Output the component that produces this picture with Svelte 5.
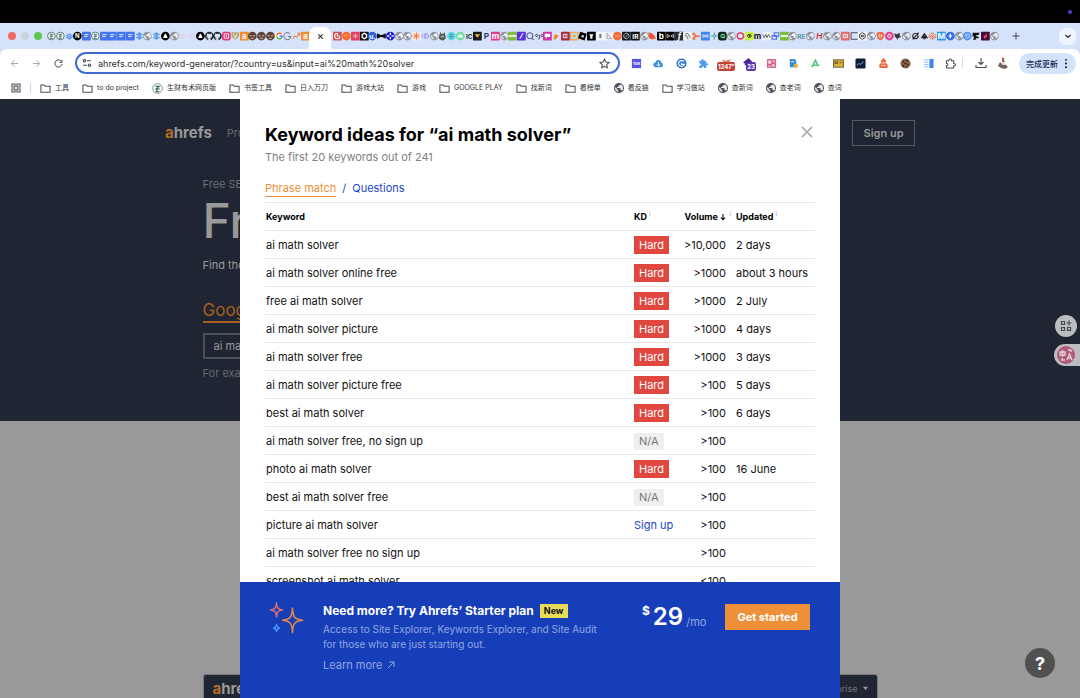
<script>
  const doc = { s: 'sq', c: '#4374ee', p: 'M4 5.5h8M4 9h6', f: '#fff' };
  const globe = { s: 'globe' };
  const seal = { s: 'ring', c: '#426f67', p: 'M5 5h5.500L6 8.500h5M8 8.500l-2 4h4.500', f: '#426f67' };
  const snow = { s: 'none', c: '', p: 'M8 1v14M2 4.500l12 7M2 11.500l12-7M5 2.500l3 3 3-3M5 13.500l3-3 3 3', f: '#5a9be6', w: 2.2 };
  const drop = { s: 'circ', c: '#000', d: 'M8 3.500C10 6 11 8 12 11.500H4C5 8 6 6 8 3.500z', f: '#fff' };
  const cat = { s: 'none', d: 'M8 0C3.580 0 0 3.580 0 8c0 3.540 2.290 6.530 5.470 7.590.400.070.550-.170.550-.380v-1.490c-2.010.370-2.530-.490-2.690-.940-.090-.230-.480-.940-.820-1.130-.280-.150-.680-.520-.010-.530.630-.010 1.080.580 1.230.820.720 1.210 1.870.870 2.330.660.070-.520.280-.870.510-1.070-1.780-.200-3.640-.890-3.640-3.950 0-.870.310-1.590.820-2.150-.080-.200-.360-1.020.080-2.120 0 0 .670-.210 2.200.820a7.600 7.600 0 0 1 4 0c1.530-1.040 2.200-.820 2.200-.820.440 1.100.160 1.920.080 2.120.510.560.820 1.270.820 2.150 0 3.070-1.870 3.750-3.650 3.950.290.250.540.730.540 1.480v2.200c0 .210.150.460.550.380A8 8 0 0 0 16 8c0-4.420-3.580-8-8-8z', f: '#24292f' };
  const mask = { s: 'circ', c: '#5b4338', d: 'M3 6l4 1-1 2-3-1zM13 6L9 7l1 2 3-1zM5 11h6l-1 2H6z', f: '#d9c3a8' };
  const heart = { s: 'none', p: 'M8 13L3 7q1-4 5-1 4-3 5 1z', f: '#e9c4dc', w: 1.5 };
  const aMark = { s: 'sq', c: '#f28b32', t: 'a', f: '#fff' };
  const strip = { s: 'sq', c: '#7dba3c', d: 'M1 6h14v4H1z', f: '#e2f3d3' };

  const leftTabs = [
    seal, seal,
    { s: 'none', p: 'M2 6l6 4 6-4M2 9.500l6 4 6-4M5 4l3 2 3-2', f: '#4b8df0', w: 2 },
    { s: 'circ', c: '#000', t: 'N', f: '#fff', z: 11 },
    doc, seal, doc, doc, doc, doc, snow, globe, snow, drop, globe, heart, heart, drop, cat, cat,
    { s: 'sq', c: '#dd3a79', p: 'M4 4h8v8H4zM8 6.500v3', f: '#fff', r: 4 },
    { s: 'none', d: 'M1 1h14v7q-2 5-7 7-5-2-7-7z', f: '#bda77c', p: 'M5 4l3 8 3-8' },
    aMark, mask, mask, mask,
    { s: 'google' },
    { s: 'none', p: 'M13 4a6.500 6.500 0 1 0 1.500 5H9', f: '#5b6069', w: 1.6 },
    { s: 'none', p: 'M1 13l4-5 3 2 6-6M10 3h4v4', f: '#ed7c35', w: 2 },
    aMark
  ];

  const rightTabs = [
    { s: 'sq', c: '#d84f52', p: 'M8 3a5 5 0 1 0 5 6M8 3v5h4', f: '#fff', w: 2 },
    { s: 'circ', c: '#f06c33', p: 'M3 8q5-3 10 0', f: '#f9b060' },
    { s: 'sq', c: '#e0405c', p: 'M8 3v10M3 8h10M5 5l6 6M11 5l-6 6', f: '#f9a3ae' },
    { s: 'sq', c: '#101214', p: 'M8 3l4 2.500v5L8 13l-4-2.500v-5z', f: '#fff', w: 2.5 },
    { s: 'circ', c: '#2c5fe2', t: 'u.', f: '#fff' },
    { s: 'none', d: 'M0 3l7 3h2l7-3v10l-7-3H7l-7 3z', f: '#111' },
    { s: 'circ', c: '#1616c9', p: 'M8 2v4M8 10v4M2 8h4M10 8h4', f: '#fff', w: 2.5 },
    globe, globe,
    { s: 'sq', c: '#fbeee8', p: 'M8 1v14M1 8h14M3 3l10 10M13 3L3 13', f: '#e36d42' },
    { s: 'none', p: 'M1 6h3M1 10h3M7 4v8q7 0 7-4T7 4', f: '#7377e8' },
    globe,
    { s: 'none', d: 'M4 0l2 4h4l2-4 1 6q2 3 1 7-3 3-6 3t-6-3q-1-4 1-7z', f: '#555b58', p: 'M5 10q3-3 6 0' },
    { s: 'circ', c: '#5cdbe5', p: 'M4 6q4-3 8 0M4 10q4-3 8 0M8 8v5', f: '#238a9e' },
    { s: 'circ', c: '#73db9b', d: 'M3 11q0-5 5-6 5 1 5 6z', f: '#e6fff0' },
    { s: 'none', t: 'IC', f: '#333' },
    { s: 'sq', c: '#191919', d: 'M3 5h10l-5 6z', f: '#f0bd3d' },
    { s: 'none', t: 'P', f: '#1b3b7c' },
    { s: 'sq', c: '#dc3e87', t: 'm', f: '#fff' },
    globe, strip,
    { s: 'sq', c: '#5b2ce2', p: 'M5 13l6-10', f: '#fff', w: 2 },
    { s: 'none', p: 'M7 2a5.500 5.500 0 1 0 .100 0M10 11l4 4', f: '#4e587c', w: 2 },
    { s: 'none', p: 'M3 5a2 2 0 1 0 .100 0M8 6v6q0 2-2 2M13 5a2 2 0 1 0 .100 0', f: '#222', w: 1.5 },
    { s: 'sq', c: '#cf33a8', d: 'M3 4h10v6H8l-3 3v-3H3z', f: '#fff' },
    { s: 'none', d: 'M3 15l1-8 5-3 3 4-4 5z', f: '#f08427', p: 'M9 6l1-5M10 6l4-2' },
    { s: 'sq', c: '#a62e40', p: 'M12 5H4v6h8M7 8h5', f: '#fff' },
    { s: 'sq', c: '#efa653', p: 'M4 4h8v8H4z', f: '#bfe3e0', w: 3 },
    { s: 'none', d: 'M4 0l12 4-4 12L0 12zM7 6L6 10l4 1 1-4z', f: '#000', even: true },
    { s: 'sq', c: '#000', d: 'M4 4l3 1h5l-2 3v5H6V8z', f: '#fff' },
    { s: 'sq', c: '#f5f6fa', d: 'M6 4h4v8H6z', f: '#7c7f83' },
    { s: 'sq', c: '#eceff5', p: 'M4 3v10h9M4 4l8 9', f: '#9ba0a8' },
    { s: 'circ', c: '#f46b36', p: 'M3 8h10', f: '#ffb98c' },
    { s: 'sq', c: '#161b1d', p: 'M8 3a5 5 0 1 0 .100 0M4 12l8-8', f: '#b8c5c5' },
    { s: 'sq', c: '#111', t: 'IR', f: '#fff' },
    globe,
    { s: 'none', d: 'M1 1q10 1 14 13H5Q0 11 1 1z', f: '#f0552e', p: 'M9 14h6' },
    { s: 'sq', c: '#000', t: 'b', f: '#fff' },
    { s: 'sq', c: '#000', p: 'M2 5l5 3-5 3zM14 5L9 8l5 3z', f: '#ccc' },
    { s: 'sq', c: '#26292f', t: 'f', f: '#fff', i: 1 },
    { s: 'sq', c: '#eef0f3', p: 'M4 5q4-4 6 0t3 6M3 8q5-2 6 6', f: '#555' },
    { s: 'none', d: 'M1 2h5v4l4 1h5v3h-5l-4 1v4H1v-4l4-3-4-2z', f: '#f07542' },
    { s: 'sq', c: '#3f83f0', p: 'M8 8C6 5 3 5 3 8s3 3 5 0 5-3 5 0-3 3-5 0', f: '#fff' },
    { s: 'none', p: 'M8 1v3M8 12v3M1 8h3M12 8h3M5 8l3-3 3 3-3 3z', f: '#5bb5b0', w: 2 },
    { s: 'sq', c: '#15241e', p: 'M12 5H7q-4 3 0 6h5V8H8', f: '#54cb92', r: 5, w: 2 },
    globe,
    { s: 'none', p: 'M8 2l5 2 1 5-3 4H5L2 9l1-5z', f: '#e93555', w: 2.5 },
    { s: 'sq', c: '#c7f44b', p: 'M4 9q0-4 4-4v5q4 0 4-3M6 12l5-8', f: '#222' },
    { s: 'none', t: 'm', f: '#111' },
    { s: 'sq', c: '#f0f2f4', p: 'M1 5l3 6 3-6 2 6 3-6 3 6', f: '#555' },
    { s: 'none', p: 'M6 2h8v7H6zM2 7h8v7H2z', f: '#4b72ee', w: 2 },
    strip, globe,
    { s: 'none', t: 'RE', f: '#559c9d' },
    globe,
    { s: 'none', t: 'H', f: '#c63945', i: 1 },
    globe, globe,
    { s: 'sq', c: '#e56b68', p: 'M4 5h8v6H4zM6 8h4', f: '#fff' },
    { s: 'none', p: 'M2 2h12M2 2v12h12', f: '#333', w: 1.5 },
    { s: 'sq', c: '#f2f3f5', p: 'M8 2l5 3v6l-5 3-5-3V5zM5 6l6 4M11 6l-6 4', f: '#333' },
    globe,
    { s: 'none', d: 'M3 1h10l2 4-2 7-5 4-5-4-2-7z', f: '#ec5a2b', p: 'M5 5l3 2 3-2-1 5-2 2-2-2z' },
    { s: 'circ', c: '#dd4290', p: 'M8 5a3 3 0 1 0 .100 0', f: '#ffd4bb', w: 2 },
    { s: 'none', d: 'M1 3l6 2 6-3-1 5 3 3-5 1-2 4-3-5-3-1 2-2z', f: '#34373a' },
    globe,
    { s: 'none', p: 'M8 3a5 5 0 1 0 .100 0M3 14L14 2', f: '#222', w: 2 },
    { s: 'none', d: 'M8 2l3 4 4 6h-5v2H6v-2H1l4-6z', f: '#272b2a' },
    { s: 'none', p: 'M2 11V7q6-9 12 0v5M5 13V8q3-4 6 0v6M8 8v7', f: '#ed743c', w: 1.8 },
    { s: 'sq', c: '#2e94e8', t: 'M', f: '#fff' },
    { s: 'circ', c: '#2e6cf1', d: 'M9 2L4 9h3l-1 5 6-7H9z', f: '#fff' },
    globe,
    { s: 'circ', c: '#4c91ef', p: 'M4 8q0-4 4-4t4 4-4 4-2-4 3-1', f: '#bfe0ff' },
    { s: 'none', d: 'M1 2h13l-2 4H8v3h4v3H7v3H2l2-6H1z', f: '#111' },
    { s: 'sq', c: '#40103a', d: 'M5 12q-1-5 6-8 1 5-2 8z', f: '#f24747' },
    globe
  ];

  const bookmarks = [
    ['folder', '工具'], ['folder', 'to do project'], ['seal', '生财有术网页版'], ['folder', '书签工具'],
    ['folder', '日入万刀'], ['folder', '游戏大站'], ['folder', '游戏'], ['folder', 'GOOGLE PLAY'],
    ['folder', '找新词'], ['folder', '看榜单'], ['globe', '看反链'], ['folder', '学习做站'],
    ['globe', '查新词'], ['globe', '查老词'], ['globe', '查词']
  ];

  const rows = [
    ['ai math solver', 'Hard', '>10,000', '2 days'],
    ['ai math solver online free', 'Hard', '>1000', 'about 3 hours'],
    ['free ai math solver', 'Hard', '>1000', '2 July'],
    ['ai math solver picture', 'Hard', '>1000', '4 days'],
    ['ai math solver free', 'Hard', '>1000', '3 days'],
    ['ai math solver picture free', 'Hard', '>100', '5 days'],
    ['best ai math solver', 'Hard', '>100', '6 days'],
    ['ai math solver free, no sign up', 'N/A', '>100', ''],
    ['photo ai math solver', 'Hard', '>100', '16 June'],
    ['best ai math solver free', 'N/A', '>100', ''],
    ['picture ai math solver', 'Sign up', '>100', ''],
    ['ai math solver free no sign up', '', '>100', ''],
    ['screenshot ai math solver', '', '<100', '']
  ];
</script>

{#snippet globeShape(color)}
  <circle cx="8" cy="8" r="7" fill="#eef2fb" />
  <path transform="translate(-1.600 -1.600) scale(.8)" fill={color} d="M12 2C6.480 2 2 6.480 2 12s4.480 10 10 10 10-4.480 10-10S17.520 2 12 2zm-1 17.930c-3.950-.490-7-3.850-7-7.930 0-.620.080-1.210.210-1.790L9 15v1c0 1.100.900 2 2 2v1.930zm6.900-2.540c-.260-.810-1-1.390-1.900-1.390h-1v-3c0-.550-.450-1-1-1H8v-2h2c.550 0 1-.450 1-1V7h2c1.100 0 2-.900 2-2v-.410c2.930 1.190 5 4.060 5 7.410 0 2.080-.800 3.970-2.100 5.390z" />
{/snippet}

{#snippet favicon(n)}
  <svg class="fav" viewBox="0 0 16 16" aria-hidden="true">
    {#if n.s === 'globe'}
      {@render globeShape('#8f949c')}
    {:else if n.s === 'google'}
      <circle cx="8" cy="8" r="8" fill="#fff" />
      <g fill="none" stroke-width="2.600">
        <path d="M12 4.500A5 5 0 0 0 3.500 6" stroke="#ea4335" />
        <path d="M3.500 6a5 5 0 0 0 0 4" stroke="#fbbc05" />
        <path d="M3.500 10a5 5 0 0 0 8 2" stroke="#34a853" />
        <path d="M11.500 12Q13 10.500 13 8H8" stroke="#4285f4" />
      </g>
    {:else}
      {#if n.s === 'sq'}<rect width="16" height="16" rx={n.r ?? 1} fill={n.c} />{/if}
      {#if n.s === 'circ'}<circle cx="8" cy="8" r="8" fill={n.c} />{/if}
      {#if n.s === 'ring'}<circle cx="8" cy="8" r="7" fill="#eef5f5" stroke={n.c} stroke-width="1.5" />{/if}
      {#if n.d}<path d={n.d} fill={n.f} fill-rule={n.even ? 'evenodd' : 'nonzero'} />{/if}
      {#if n.p}<path d={n.p} fill="none" stroke={n.d ? '#f4efe0' : n.f} stroke-width={n.w ?? 1.6} />{/if}
      {#if n.t}<text x="8" y={n.z ? 12 : 13} text-anchor="middle" font-size={n.z ?? (n.t.length > 1 ? 12 : 15)} font-weight="700" font-style={n.i ? 'italic' : 'normal'} fill={n.f}>{n.t}</text>{/if}
    {/if}
  </svg>
{/snippet}

<div class="screen">
  <div class="menubar"><span class="dot"></span></div>

  <header class="browser">
    <div class="tabs">
      <div class="lights"><i class="red"></i><i class="grey"></i><i class="green"></i></div>
      <div class="favs left">{#each leftTabs as n}{@render favicon(n)}{/each}</div>
      <button class="active" aria-label="Close tab">
        <svg viewBox="0 0 8 8" width="7" height="7"><path d="M1.500 1.500l5 5M6.500 1.500l-5 5" stroke="#222" stroke-width="1.2" /></svg>
      </button>
      <div class="favs right">{#each rightTabs as n}{@render favicon(n)}{/each}</div>
      <button class="plain plus" aria-label="New tab">
        <svg viewBox="0 0 8 8" width="8" height="8"><path d="M4 .500v7M.500 4h7" stroke="#444a55" stroke-width="1" /></svg>
      </button>
      <button class="plain chev" aria-label="Search tabs">
        <svg viewBox="0 0 8 8" width="8" height="8"><path d="M1.500 3L4 5.500 6.500 3" fill="none" stroke="#222" stroke-width="1.2" /></svg>
      </button>
    </div>

    <div class="toolbar">
      <div class="navs">
        <button class="plain" aria-label="Back"><svg viewBox="0 0 10 10"><path d="M9 5H1.500M5 1.500L1.500 5 5 8.500" class="ln faint" /></svg></button>
        <button class="plain" aria-label="Forward"><svg viewBox="0 0 10 10"><path d="M1 5h7.500M5 1.500L8.500 5 5 8.500" class="ln faint" /></svg></button>
        <button class="plain" aria-label="Reload"><svg viewBox="0 0 10 10"><path d="M8.500 3A4 4 0 1 0 9 5.500M8.800 1v2.800H6" class="ln" /></svg></button>
      </div>
      <div class="address">
        <svg viewBox="0 0 10 10" width="10" height="10"><circle cx="2.500" cy="2.800" r="1.200" class="ln" /><path d="M5 2.800h4M1 7.200h4" class="ln" /><circle cx="7.500" cy="7.200" r="1.200" class="ln" /></svg>
        <input aria-label="Address" value="ahrefs.com/keyword-generator/?country=us&input=ai%20math%20solver" />
        <button class="plain" aria-label="Bookmark"><svg viewBox="0 0 12 12" width="11" height="11"><path d="M6 1.200l1.500 3.200 3.400.400-2.500 2.400.700 3.500L6 9 2.900 10.700l.700-3.500L1.100 4.800l3.400-.400z" class="ln" /></svg></button>
      </div>
      <div class="exts">
        <span><svg viewBox="0 0 12 12"><rect x="1" y="1" width="10" height="10" fill="#5b52ec" /><text x="6" y="8" text-anchor="middle" font-size="4" font-weight="700" fill="#fff">TDK</text></svg></span>
        <span><svg viewBox="0 0 12 12"><path d="M3 10a2.500 2.500 0 0 1-.500-5Q4 1.500 7 2.500q2 .500 2.300 2.700A2.500 2.500 0 0 1 9 10z" fill="#3f92d9" /><path d="M6 4.500v4M4.200 7L6 8.800 7.800 7" stroke="#fff" fill="none" /></svg></span>
        <span><svg viewBox="0 0 12 12"><circle cx="6" cy="6" r="5.500" fill="#2e73cf" /><path d="M8.500 4a3.200 3.200 0 1 0 .500 3H6V5.500" stroke="#fff" fill="none" stroke-width="1.300" /></svg></span>
        <span><svg viewBox="0 0 12 12"><path d="M1.500 3H4q-.700-2 1-2t1 2h3v3q2-.700 2 .800T9 7.800V11H6.500q.300-2-1-2t-1 2H1.500V8q2 .300 2-1t-2-1z" fill="#4a9df0" /></svg></span>
        <span class="badged"><svg viewBox="0 0 12 12"><path d="M1 1l4 2 6-2-2 4H3z" fill="#e58775" /></svg><b class="badge wide">1247°</b></span>
        <span class="badged"><svg viewBox="0 0 12 12"><path d="M0 5l6-5 4 4v4H2V6z" fill="#48248b" /></svg><b class="badge violet">23</b></span>
        <span><svg viewBox="0 0 12 12"><rect x="1" y="1" width="10" height="10" rx="1" fill="#d9608f" /><path d="M2.500 3.500h3v2h-3zM4 2.500v4M7 3h2v2M3 8v1.500h2M6.500 9.500L8 6.500l1.500 3M7 8.500h2" stroke="#fff" fill="none" stroke-width=".8" /></svg></span>
        <span><svg viewBox="0 0 12 12"><path d="M2 1h5l2 2v7H2z" fill="#348cdc" /><circle cx="8.500" cy="8.500" r="2.500" fill="#e4b83c" /><path d="M3.500 4h3" stroke="#fff" /></svg></span>
        <span><svg viewBox="0 0 12 12"><path d="M2 10l4-7.500 3 6.500M4 8h6" stroke="#55c478" stroke-width="1.700" fill="none" /></svg></span>
        <span><svg viewBox="0 0 12 12"><rect x=".5" y="2" width="11" height="8" fill="#ddb13c" stroke="#695b38" /><path d="M2 4h3v2H2zM7 5h3" stroke="#6c5726" fill="none" /></svg></span>
        <span><svg viewBox="0 0 12 12"><rect x=".5" y=".5" width="11" height="11" rx="1.500" fill="#101b36" /><path d="M2 8l2-2 2 1 3.500-3" stroke="#6bc4ef" fill="none" /></svg></span>
        <span><svg viewBox="0 0 12 12"><path d="M6 0l3 3-1 2 2.500 2v4h-9V7L4 5 3 3z" fill="#ed683b" /><path d="M4 5.500h4M3.500 8h5" stroke="#fff" stroke-width=".8" /></svg></span>
        <span><svg viewBox="0 0 12 12"><circle cx="6" cy="6" r="5.500" fill="#8a6049" /><path d="M3 4h1.500M7 3h1.500M5 6h1.500M8 7h1.500M3 8.500h1.500M7 9.500h1" stroke="#1e1512" stroke-width="1.500" /></svg></span>
        <span><svg viewBox="0 0 12 12"><path d="M7 1h4.500v10H7z" fill="#3e87e8" /><path d="M1 2h5M1 4.500h5M1 7h5M1 9.500h5" stroke="#87b6f5" /></svg></span>
        <span><svg viewBox="0 0 12 12"><path d="M1.500 3H4.200q0-2 1.500-2t1.500 2h2.300v3q2 0 2 1.300T9.500 8.500V11h-8V8.300q1.700 0 1.700-1.300T1.500 5.700z" class="ln" /></svg></span>
      </div>
      <i class="rule"></i>
      <div class="tail">
        <button class="plain" aria-label="Downloads"><svg viewBox="0 0 12 12" width="12" height="12"><path d="M6 1v6.500M3.500 5L6 7.500 8.500 5M1 8v2.500h10V8" class="ln" /></svg></button>
        <button class="plain" aria-label="Profile"><svg viewBox="0 0 12 12" width="12" height="12"><path d="M4 11L1 9l2-4 2 2V3l2-1 1 5 3 3-3 2z" fill="#70615c" /><path d="M5 5h3v3H5z" fill="#eddad0" /><circle cx="6" cy="1.800" r="1.200" fill="#c45840" /></svg></button>
        <button class="update">完成更新<svg viewBox="0 0 4 12" width="4" height="11"><circle cx="2" cy="2" r="1" /><circle cx="2" cy="6" r="1" /><circle cx="2" cy="10" r="1" /></svg></button>
      </div>
    </div>

    <nav class="marks" aria-label="Bookmarks">
      <svg class="apps" viewBox="0 0 10 10" width="10" height="10"><path d="M1 1h3v3H1zM6 1h3v3H6zM1 6h3v3H1zM6 6h3v3H6z" class="ln" /></svg>
      <i class="rule"></i>
      {#each bookmarks as [kind, label]}
        <a href="#bookmark">
          {#if kind === 'folder'}
            <svg viewBox="0 0 12 12" width="11" height="11"><path d="M1 2.200h3.500l1.200 1.300H11V10H1z" class="ln" /></svg>
          {:else if kind === 'seal'}
            <svg viewBox="0 0 16 16" width="11" height="11"><circle cx="8" cy="8" r="7" fill="#fff" stroke="#426f67" /><path d={seal.p} fill="none" stroke="#426f67" stroke-width="1.700" /></svg>
          {:else}
            <svg viewBox="0 0 16 16" width="10" height="10">{@render globeShape('#50545b')}</svg>
          {/if}
          {label}
        </a>
      {/each}
    </nav>
  </header>

  <main class="page">
    <section class="hero">
      <div class="sitenav">
        <strong class="logo"><span>a</span>hrefs</strong>
        <span class="link">Pro</span>
        <button class="signup">Sign up</button>
      </div>
      <div class="content">
        <p class="crumb">Free SEO</p>
        <h1>Free</h1>
        <p class="lead">Find the</p>
        <a class="engine" href="#google">Google</a>
        <input class="query" aria-label="Keyword" value="ai math" />
        <p class="hint">For example</p>
      </div>
    </section>
    <div class="bar">
      <strong class="logo"><span>a</span>hrefs</strong>
      <span class="ent">Enterprise <svg viewBox="0 0 6 6" width="5" height="5"><path d="M0 1h6L3 5z" fill="#999" /></svg></span>
    </div>

    <div class="modal" role="dialog" aria-labelledby="title">
      <div class="scroll">
        <div class="head">
          <h2 id="title">Keyword ideas for “ai math solver”</h2>
          <button class="plain" aria-label="Close"><svg viewBox="0 0 12 12" width="12" height="12"><path d="M1 1l10 10M11 1L1 11" stroke="#a6a6a6" stroke-width="1.600" /></svg></button>
        </div>
        <p class="count">The first 20 keywords out of 241</p>
        <div class="switch"><a class="on" href="#phrase">Phrase match</a><span>/</span><a href="#questions">Questions</a></div>
        <table>
          <colgroup><col /><col class="kd" /><col class="vol" /><col class="upd" /></colgroup>
          <thead>
            <tr><th>Keyword</th><th>KD <sup>i</sup></th><th class="num">Volume <svg viewBox="0 0 6 8" width="6" height="7"><path d="M3 0v6.500M.500 4L3 6.500 5.500 4" fill="none" stroke="#000" stroke-width="1.200" /></svg><sup class="out">i</sup></th><th class="up">Updated <sup>i</sup></th></tr>
          </thead>
          <tbody>
            {#each rows as [kw, kd, vol, upd]}
              <tr>
                <td>{kw}</td>
                <td>{#if kd === 'Hard'}<span class="hard">Hard</span>{:else if kd === 'N/A'}<span class="na">N/A</span>{:else if kd}<a href="#signup">{kd}</a>{/if}</td>
                <td class="num">{vol}</td>
                <td class="up">{upd}</td>
              </tr>
            {/each}
          </tbody>
        </table>
      </div>
      <footer>
        <svg class="stars" viewBox="0 0 37 34" width="37" height="34" fill="none" stroke-width="1.500" stroke-linejoin="round">
          <path d="M9.500 2C9.800 7 11 8.500 15.500 9 11 9.500 9.800 11 9.500 16 9.200 11 8 9.500 3.500 9 8 8.500 9.200 7 9.500 2z" stroke="#e3706f" />
          <path d="M25.500 7C26 15.500 27 18.300 35.500 19.300 27 20.300 26 23 25.500 31.500 25 23 24 20.300 15.500 19.300 24 18.300 25 15.500 25.500 7z" stroke="#e88b45" />
          <path d="M9.500 23.500Q10 26.500 12.500 27 10 27.500 9.500 30.500 9 27.500 6.500 27 9 26.500 9.500 23.500z" stroke="#4295f5" />
        </svg>
        <div class="pitch">
          <h3>Need more? Try Ahrefs’ Starter plan <span class="new">New</span></h3>
          <p>Access to Site Explorer, Keywords Explorer, and Site Audit for those who are just starting out.</p>
          <a href="#learn">Learn more <svg viewBox="0 0 8 8" width="8" height="8"><path d="M1 7l6-6M2 1h5v5" fill="none" stroke="currentColor" /></svg></a>
        </div>
        <div class="price"><sup>$</sup><strong>29</strong><span>/mo</span></div>
        <button class="cta">Get started</button>
      </footer>
    </div>

    <div class="floaters">
      <button class="tile" aria-label="Add widget"><svg viewBox="0 0 12 12" width="12" height="12"><path d="M1.500 1.500h3v3h-3zM1.500 7.500h3v3h-3zM7.500 7.500h3v3h-3zM9 .500v5M6.500 3h5" fill="none" stroke="#44474b" stroke-width="1.200" /></svg></button>
      <button class="trans" aria-label="Translate"><svg viewBox="0 0 18 18" width="18" height="18"><circle cx="9" cy="9" r="9" fill="#b2597a" /><path d="M3 6h5v3H3zM5.500 4v7M11 4h3v2M5 12v2h3M10 14l2.500-6 2.500 6M11 12h3" fill="none" stroke="#e0d4d9" stroke-width="1.300" /></svg></button>
    </div>
    <button class="help" aria-label="Help">?</button>
  </main>
</div>

<style>
  :global(body) { margin: 0; background: #999; }
  * { box-sizing: border-box; }
  button, input { font: inherit; }
  h1, h2, h3, p { margin: 0; }
  a { color: inherit; text-decoration: none; }
  svg { display: block; flex: none; }
  .screen { display: flex; flex-direction: column; height: 100vh; overflow: hidden; font-family: Inter, "Noto Sans CJK SC", sans-serif; }
  .plain { display: flex; align-items: center; justify-content: center; padding: 0; border: 0; background: none; }
  .ln { fill: none; stroke: #474b52; stroke-width: 1.1; }
  .faint { stroke: #a4a7ac; }
  .rule { width: 1px; height: 10px; background: #c9dafa; }

  .menubar { display: flex; align-items: center; justify-content: flex-end; height: 23px; padding-right: 8px; background: #000; flex: none; }
  .dot { width: 4px; height: 4px; border-radius: 50%; background: #6038c8; }

  .browser { flex: none; background: #d6e1fa; }
  .tabs { display: flex; align-items: center; height: 26px; padding: 0 4px 0 8px; }
  .lights { display: flex; gap: 5px; width: 39px; flex: none; }
  .lights i { width: 8px; height: 8px; border-radius: 50%; }
  .red { background: #ee6a5f; }
  .grey { background: #ccd2df; }
  .green { background: #61c554; }
  .favs { display: flex; flex: 30 1 0; min-width: 0; }
  .favs.right { flex-grow: 76; margin-left: 2px; }
  .fav { flex: 1 1 0; min-width: 0; height: 10px; overflow: visible; }
  .active { display: flex; align-items: center; justify-content: center; align-self: flex-end; width: 22px; height: 22px; padding: 0 0 4px; border: 0; border-radius: 7px 7px 0 0; background: #fff; flex: none; }
  .plus { width: 36px; flex: none; }
  .chev { width: 17px; height: 17px; margin-left: 25px; border-radius: 6px; background: #eef3fd; flex: none; }

  .toolbar { display: flex; align-items: center; height: 28px; padding: 0 4px 0 8px; border-radius: 7px 7px 0 0; background: #fff; }
  .navs { display: flex; gap: 10px; width: 67px; flex: none; }
  .navs button { width: 12px; }
  .navs svg { width: 9px; height: 9px; }
  .address { display: flex; align-items: center; gap: 6px; flex: 1; min-width: 0; height: 22px; padding: 0 8px 0 5px; border: 2px solid #3e6cd3; border-radius: 11px; }
  .address input { flex: 1; min-width: 0; padding: 0; border: 0; outline: 0; background: none; font-size: 9px; color: #2c2f36; }
  .exts { display: flex; width: 337px; margin-left: 5px; flex: none; }
  .exts > span { display: flex; flex: 1; align-items: center; justify-content: center; position: relative; }
  .exts svg { width: 11px; height: 11px; }
  .badge { position: absolute; left: 2px; top: 4px; padding: 0 1px; border-radius: 2px; background: #c6413b; color: #fff; font-size: 6px; line-height: 9px; }
  .badge.violet { left: 9px; background: #5736b5; }
  .tail { display: flex; align-items: center; gap: 10px; margin-left: 12px; flex: none; }
  .update { display: flex; align-items: center; gap: 6px; height: 21px; padding: 0 8px 0 7px; border: 0; border-radius: 11px; background: #d5e2fb; font-size: 8px; font-weight: 500; color: #1b2a55; }

  .marks { display: flex; align-items: center; gap: 13px; height: 22px; padding: 0 11px; background: #fff; font-size: 7px; line-height: 10px; color: #303338; white-space: nowrap; }
  .marks a { display: flex; align-items: center; gap: 4px; }
  .marks .rule { margin: 0 -4px; }

  .page { position: relative; flex: 1; min-height: 0; overflow: hidden; background: #999; }
  .hero { height: 322px; background: #1f2532; color: #999; }
  .sitenav { display: flex; align-items: center; max-width: 750px; margin: 0 auto; padding-top: 21px; }
  .logo { font-size: 15px; line-height: 20px; color: #999; }
  .logo span { color: #b96d24; }
  .link { margin-left: 15px; font-size: 11px; color: #656973; }
  .signup { width: 63px; height: 26px; margin-left: auto; padding: 0; border: 1px solid #555a65; background: none; color: #999; font-size: 11px; font-weight: 600; }
  .content { display: flex; flex-direction: column; align-items: flex-start; max-width: 675px; margin: 0 auto; padding-top: 30px; }
  .crumb { font-size: 11px; line-height: 16px; color: #6b6f78; }
  h1 { font-size: 48px; line-height: 58px; font-weight: 500; }
  .lead { padding-top: 7px; font-size: 11px; line-height: 16px; }
  .engine { margin-top: 27px; border-bottom: 2px solid #a55f1e; font-size: 17px; line-height: 21px; color: #a55f1e; }
  .query { width: 70%; height: 26px; margin-top: 10px; padding: 0 9px; border: 2px solid #4b505b; background: none; font-size: 11px; color: #999; }
  .hint { padding-top: 6px; font-size: 11px; line-height: 16px; color: #656973; }
  .bar { position: absolute; left: 0; right: 0; bottom: 0; display: flex; align-items: center; justify-content: space-between; max-width: 675px; height: 24px; margin: 0 auto; padding: 4px 9px 0; border: 1px solid #777; border-bottom: 0; border-radius: 3px 3px 0 0; background: #1f2532; }
  .ent { display: flex; align-items: center; gap: 5px; font-size: 9px; color: #777; }

  .modal { position: absolute; top: 0; bottom: 0; left: 0; right: 0; display: flex; flex-direction: column; max-width: 600px; margin: 0 auto; background: #fff; color: #111; }
  .scroll { flex: 1; min-height: 0; overflow: hidden; padding: 24px 25px 0; }
  .head { display: flex; align-items: center; justify-content: space-between; padding-right: 2px; }
  h2 { font-size: 18px; line-height: 24px; font-weight: 700; color: #000; }
  .head button { margin-bottom: 7px; }
  .count { font-size: 11px; line-height: 20px; color: #808080; }
  .switch { display: flex; gap: 6px; margin-top: 13px; font-size: 11px; line-height: 16px; color: #1c46c8; }
  .switch .on { border-bottom: 1px solid #ed8f38; color: #ed8f38; }
  table { width: 100%; margin-top: 5px; border-collapse: collapse; border-top: 1px solid #e8e8e8; table-layout: fixed; }
  .kd { width: 50px; }
  .vol { width: 43px; }
  .upd { width: 89px; }
  tr { height: 28px; border-bottom: 1px solid #e8e8e8; }
  th { padding: 0 0 0 1px; font-size: 9px; line-height: 10px; text-align: left; color: #000; white-space: nowrap; }
  td { padding: 0 0 0 1px; font-size: 11px; line-height: 18px; white-space: nowrap; }
  td a { color: #1c46c8; }
  th svg { display: inline-block; vertical-align: -1px; }
  sup { font-size: 6px; font-weight: 400; line-height: 1; color: #999; }
  .num { position: relative; padding-left: 0; text-align: right; }
  .out { position: absolute; right: -5px; top: 8px; }
  .up { padding-left: 10px; }
  .hard, .na { display: inline-block; padding: 0 5px; background: #e0473f; color: #fff; }
  .na { background: #efefef; color: #777; line-height: 17px; }

  footer { display: flex; align-items: flex-start; height: 116px; flex: none; padding: 19px 30px 0 27px; background: #173eb9; color: #fff; }
  .pitch { width: 300px; margin-left: 19px; color: #91a6e0; }
  h3 { display: flex; align-items: center; gap: 6px; font-size: 12px; line-height: 20px; color: #fff; white-space: nowrap; }
  .new { padding: 0 4px; background: #eadb57; color: #111; font-size: 9px; line-height: 14px; }
  .pitch p { width: 285px; margin-top: 1px; font-size: 10px; line-height: 15px; }
  .pitch a { display: inline-flex; align-items: center; gap: 5px; margin-top: 3px; font-size: 11px; line-height: 20px; }
  .price { display: flex; align-items: flex-start; gap: 3px; margin-left: 19px; }
  .price sup { padding-top: 4px; font-size: 12px; font-weight: 700; color: #fff; }
  .price strong { font-size: 24px; line-height: 32px; font-weight: 600; }
  .price span { padding-top: 13px; font-size: 11px; line-height: 16px; color: #91a6e0; }
  .cta { width: 85px; height: 26px; margin: 3px 0 0 auto; padding: 0; border: 0; background: #ef9038; color: #fff; font-size: 11px; font-weight: 700; }

  .floaters { position: absolute; right: 0; top: 216px; display: flex; flex-direction: column; align-items: flex-end; gap: 7px; }
  .tile, .trans { display: flex; align-items: center; justify-content: center; width: 22px; height: 22px; margin-right: 3px; padding: 0; border: 0; border-radius: 50%; background: #bbbdc0; }
  .trans { justify-content: flex-start; width: 26px; margin: 0; padding-left: 3px; border-radius: 11px 0 0 11px; }
  .help { position: absolute; right: 25px; bottom: 20px; width: 30px; height: 30px; padding: 0; border: 0; border-radius: 50%; background: #505050; color: #fff; font-size: 18px; font-weight: 700; }
</style>
